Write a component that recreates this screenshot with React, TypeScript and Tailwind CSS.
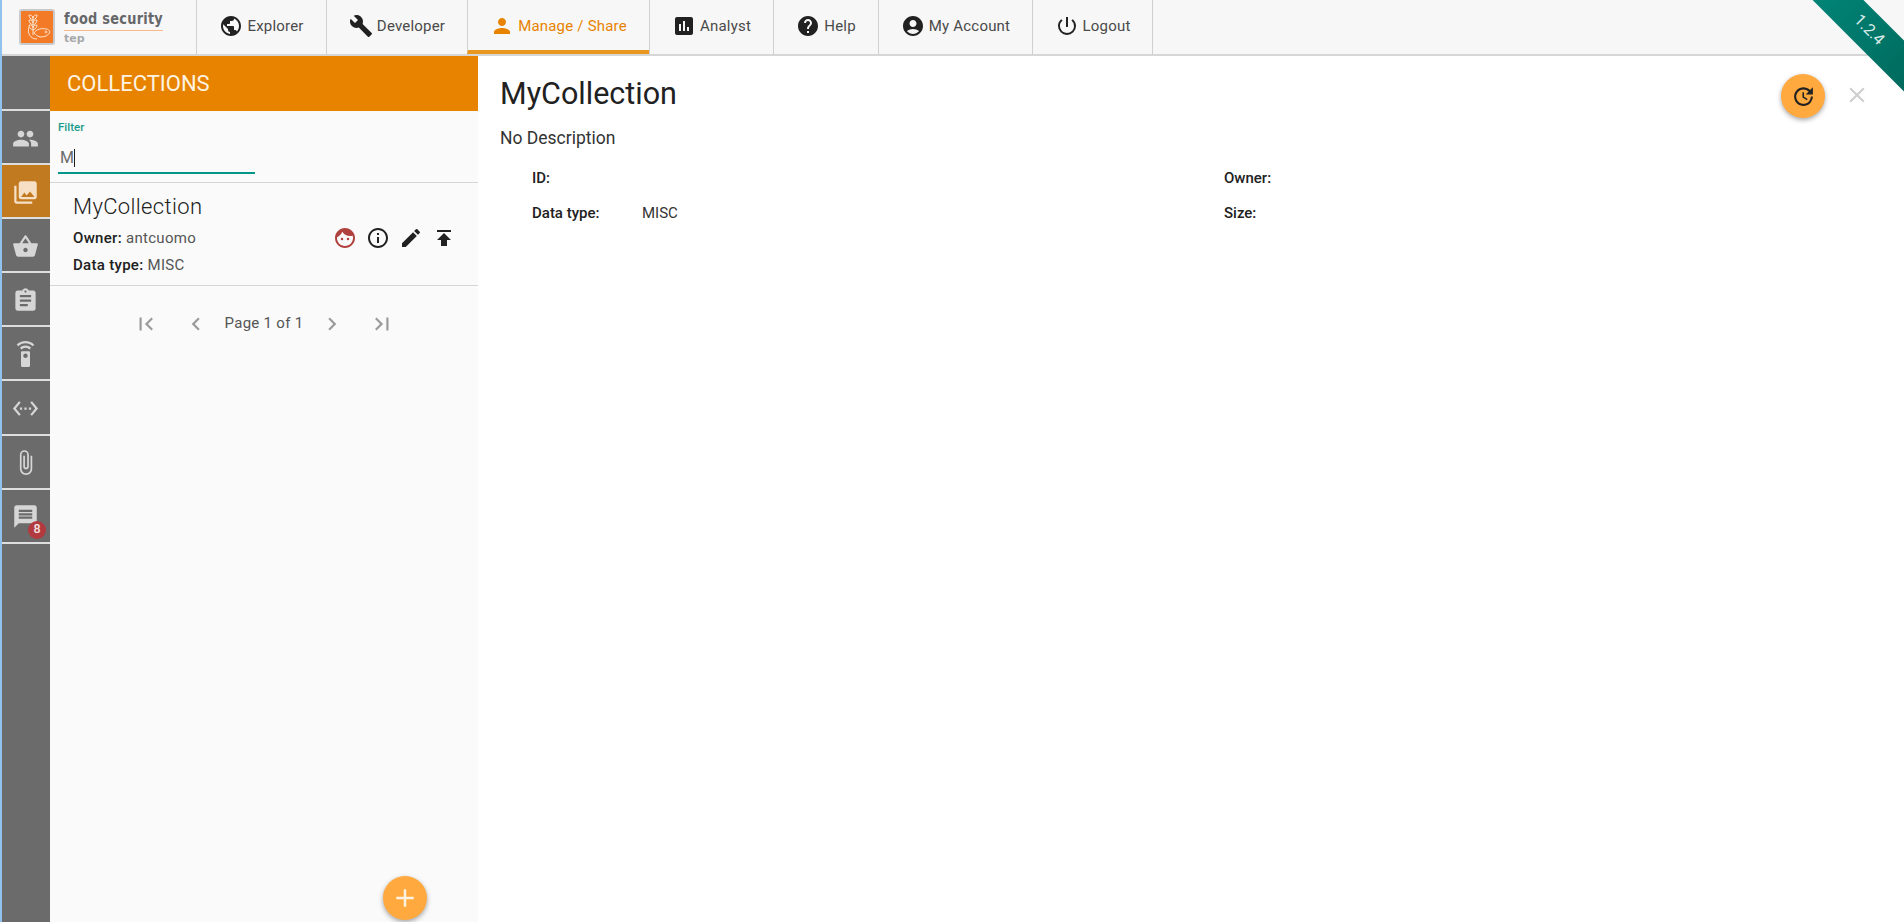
import {
  MdAccountCircle,
  MdAdd,
  MdAssessment,
  MdAssignment,
  MdAttachFile,
  MdBuild,
  MdChevronLeft,
  MdChevronRight,
  MdClose,
  MdCollections,
  MdEdit,
  MdFace,
  MdFirstPage,
  MdGroup,
  MdHelp,
  MdInfoOutline,
  MdLastPage,
  MdMessage,
  MdPerson,
  MdPowerSettingsNew,
  MdPublic,
  MdPublish,
  MdSettingsEthernet,
  MdSettingsRemote,
  MdShoppingBasket,
  MdUpdate,
} from "react-icons/md"

const navItems = [
  { label: "Explorer", icon: MdPublic, width: "w-[130px]" },
  { label: "Developer", icon: MdBuild, width: "w-[141px]" },
  { label: "Manage / Share", icon: MdPerson, width: "w-[182px]", active: true },
  { label: "Analyst", icon: MdAssessment, width: "w-[124px]" },
  { label: "Help", icon: MdHelp, width: "w-[105px]" },
  { label: "My Account", icon: MdAccountCircle, width: "w-[154px]" },
  { label: "Logout", icon: MdPowerSettingsNew, width: "w-[121px]" },
]

const sideItems = [
  { icon: MdGroup },
  { icon: MdCollections, active: true },
  { icon: MdShoppingBasket },
  { icon: MdAssignment },
  { icon: MdSettingsRemote },
  { icon: MdSettingsEthernet },
  { icon: MdAttachFile },
  { icon: MdMessage, badge: "8" },
]

function Logo() {
  return (
    <div className="flex w-[194px] items-center pl-[17px]">
      <div className="flex h-[36px] w-[36px] items-center justify-center rounded-[3px] border-2 border-[#c9c9c9] bg-[#f37b28]">
        <svg viewBox="0 0 32 32" className="h-[32px] w-[32px]" fill="none" stroke="#fde3cf" strokeWidth="1">
          <path d="M12 5v19M12 9c-3-1-4-3-4-5 2 0 4 1 4 3 0-2 2-3 4-3 0 2-1 4-4 5M12 14c-3-1-4-3-4-5 2 0 4 1 4 3 0-2 2-3 4-3 0 2-1 4-4 5M12 19c-3-1-4-3-4-5 2 0 4 1 4 3 0-2 2-3 4-3 0 2-1 4-4 5" />
          <path d="M13 22c2-4 8-5 12-4 2 0 3 1 4 3-1 3-5 5-9 5-3 0-5-2-7-4zM8 16c-2 6 1 12 8 12" />
          <circle cx="25" cy="21" r="0.9" />
        </svg>
      </div>
      <div className="ml-[9px] flex flex-col font-['DejaVu_Sans',sans-serif]">
        <div className="mt-[2px] w-[99px] border-b border-[#fbb78a] pb-[2px]">
          <span className="block origin-left scale-x-[0.86] text-[15px] leading-[18px] font-bold tracking-[0.3px] whitespace-nowrap text-[#66676a]">
            food security
          </span>
        </div>
        <span className="mt-[1px] text-[11px] leading-[14px] font-bold text-[#a7a8aa]">tep</span>
      </div>
    </div>
  )
}

function Field({ label, value }: { label: string; value?: string }) {
  return (
    <div className="flex text-[15px] leading-[20px]">
      <span className="w-[110px] font-medium text-[#212121]">{label}</span>
      <span className="text-[#333]">{value}</span>
    </div>
  )
}

export default function App() {
  return (
    <div className="relative flex h-[922px] w-[1904px] flex-col overflow-hidden border-l-2 border-[#90c2f0] bg-white font-['Roboto',sans-serif] text-[#212121]">
      {/* top bar */}
      <header className="flex h-[56px] shrink-0 border-b-2 border-[#d6d6d6] bg-[#f7f7f7]">
        <Logo />
        <nav className="flex">
          {navItems.map((item) => (
            <div
              key={item.label}
              className={`flex items-center justify-center gap-[4px] border-l border-[#d0d0d0] pb-[2px] text-[15px] tracking-[0.2px] last:border-r ${item.width} ${
                item.active ? "border-b-[4px] border-b-[#e8981f] pt-[4px] text-[#e88300]" : "text-[#4a4a4a]"
              }`}
            >
              <item.icon className={`text-[24px] ${item.active ? "text-[#e88300]" : "text-[#212121]"}`} />
              <span>{item.label}</span>
            </div>
          ))}
        </nav>
      </header>

      <div className="flex min-h-0 flex-1">
        {/* icon rail */}
        <aside className="flex w-[48px] shrink-0 flex-col bg-[#6b6b6b]">
          <div className="h-[55px] shrink-0 border-b-2 border-[#dedede]" />
          {sideItems.map((item, i) => (
            <div
              key={i}
              className={`relative flex h-[54.1px] shrink-0 items-center justify-center border-b-2 border-[#dedede] pt-[2px] pr-[1px] ${
                item.active ? "bg-[#c27a20] text-[#f6dfc4]" : "text-[#d6d6d6]"
              }`}
            >
              <item.icon className="text-[27px]" />
              {item.badge && (
                <span className="absolute top-[31px] left-[26px] flex h-[18px] w-[18px] items-center justify-center rounded-full bg-[#b23a3e] text-[12.5px] font-medium text-[#f4e3e3]">
                  {item.badge}
                </span>
              )}
            </div>
          ))}
        </aside>

        {/* collection list */}
        <section className="relative flex w-[428px] shrink-0 flex-col bg-[#fafafa]">
          <div className="flex h-[55px] shrink-0 items-center bg-[#e88300] pb-[1px] pl-[17px] text-[22px] text-[#fdf3e3]">
            COLLECTIONS
          </div>
          <div className="h-[71px] shrink-0 pl-[8px]">
            <div className="pt-[9px] text-[11.5px] leading-[14px] font-medium text-[#1a9a8a]">Filter</div>
            <div className="mt-[10px] flex h-[30px] w-[197px] items-center border-b-2 border-[#009688] pl-[2px] text-[16px] text-[#6a6a6a]">
              M<span className="h-[18px] w-px bg-[#212121]" />
            </div>
          </div>
          <div className="flex h-[104px] shrink-0 flex-col border-y border-[#d6d6d6] pl-[23px]">
            <div className="mt-[10px] text-[22px] leading-[28px] font-light tracking-[0.35px] text-[#212121]">
              MyCollection
            </div>
            <div className="flex items-center justify-between pr-[22px]">
              <div className="mt-[4px] text-[15px] leading-[27px] tracking-[0.3px]">
                <div>
                  <span className="font-medium text-[#212121]">Owner:</span>{" "}
                  <span className="text-[#555]">antcuomo</span>
                </div>
                <div>
                  <span className="font-medium text-[#212121]">Data type:</span>{" "}
                  <span className="text-[#555]">MISC</span>
                </div>
              </div>
              <div className="-mt-[24px] flex items-center gap-[9px]">
                <span className="flex h-[24px] w-[24px] items-center justify-center">
                  <MdFace className="text-[24px] text-[#b0413e]" />
                </span>
                <MdInfoOutline className="text-[24px]" />
                <MdEdit className="text-[24px]" />
                <MdPublish className="text-[24px]" />
              </div>
            </div>
          </div>
          <div className="mt-[25px] flex items-center justify-center text-[#9a9a9a]">
            <MdFirstPage className="text-[26px]" />
            <MdChevronLeft className="ml-[24px] text-[26px]" />
            <span className="mx-[15px] -mt-[2px] text-[15px] tracking-[0.3px] text-[#555]">Page 1 of 1</span>
            <MdChevronRight className="text-[26px]" />
            <MdLastPage className="ml-[24px] text-[26px]" />
          </div>
          <button className="absolute bottom-[2px] left-[333px] flex h-[44px] w-[44px] items-center justify-center rounded-full bg-[#ffa93e] text-[#fdf1e0] shadow-[0_2px_5px_rgba(0,0,0,0.35)]">
            <MdAdd className="text-[30px]" />
          </button>
        </section>

        {/* detail */}
        <main className="relative min-w-0 flex-1 overflow-hidden bg-white pl-[22px] text-[#212121]">
          <h1 className="mt-[20px] text-[30.5px] leading-[36px]">MyCollection</h1>
          <p className="mt-[15px] text-[17.5px] leading-[22px] text-[#333]">No Description</p>
          <div className="mt-[19px] grid w-[1400px] grid-cols-[692px_1fr] gap-y-[15px] pl-[32px]">
            <Field label="ID:" />
            <Field label="Owner:" />
            <Field label="Data type:" value="MISC" />
            <Field label="Size:" />
          </div>
          <button className="absolute top-[18px] right-[79px] flex h-[44px] w-[44px] items-center justify-center rounded-full bg-[#ffa93e] text-[#212121] shadow-[0_2px_5px_rgba(0,0,0,0.35)]">
            <MdUpdate className="text-[25px]" />
          </button>
          <MdClose className="absolute top-[26px] right-[34px] text-[26px] text-[#cfcfcf]" />
        </main>
      </div>

      {/* version ribbon */}
      <div className="absolute top-[9px] right-[-41px] flex h-[36px] w-[160px] rotate-45 items-center justify-center bg-gradient-to-r from-[#00897b] to-[#00695c] pb-[2px] pl-[10px] text-[16px] text-[#d9ece9]">
        1.2.4
      </div>
    </div>
  )
}
